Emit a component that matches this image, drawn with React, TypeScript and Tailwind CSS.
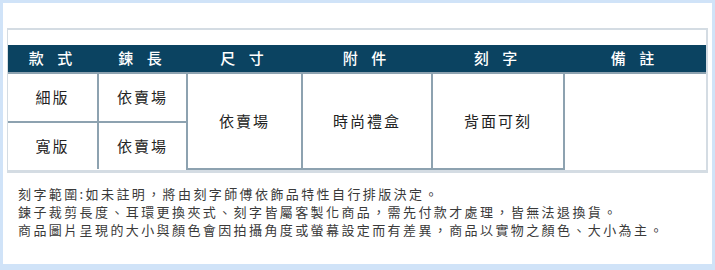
import React from 'react';

const cols = [
  { label: '款 式', w: 'w-[90px]' },
  { label: '鍊 長', w: 'w-[89px]' },
  { label: '尺 寸', w: 'w-[115px]' },
  { label: '附 件', w: 'w-[130px]' },
  { label: '刻 字', w: 'w-[132px]' },
  { label: '備 註', w: 'w-[142px]' },
];

const notes = [
  '刻字範圍:如未註明，將由刻字師傅依飾品特性自行排版決定。',
  '鍊子裁剪長度、耳環更換夾式、刻字皆屬客製化商品，需先付款才處理，皆無法退換貨。',
  '商品圖片呈現的大小與顏色會因拍攝角度或螢幕設定而有差異，商品以實物之顏色、大小為主。',
];

const cell = 'border-2 border-[#8da2b0] text-center align-middle text-[15px] tracking-[2px] text-[#222]';

export default function App() {
  return (
    <div
      className="w-[715px] h-[270px] bg-white border-[#d0e3f8] border-t-[3px] border-x-[3px] border-b-[6px] px-[4px] pt-[25px]"
      style={{ fontFamily: '"Noto Sans CJK TC", "Noto Sans", sans-serif' }}
    >
      {/* spec table */}
      <div className="w-[701px] border-[#d4dce3] border-l border-t-2 border-r-2 border-b-[3px] pt-[15px]">
        <table className="w-[698px] border-collapse table-fixed">
          <thead>
            <tr className="h-[28px] bg-[#0b4361]">
              {cols.map((c) => (
                <th
                  key={c.label}
                  className={`${c.w} p-0 text-center text-[15px] font-medium tracking-[5px] text-white`}
                >
                  {c.label}
                </th>
              ))}
            </tr>
          </thead>
          <tbody>
            <tr className="h-[49px]">
              <td className={`${cell} border-l-0`}>細版</td>
              <td className={cell}>依賣場</td>
              <td rowSpan={2} className={cell}>依賣場</td>
              <td rowSpan={2} className={cell}>時尚禮盒</td>
              <td rowSpan={2} className={cell}>背面可刻</td>
              <td rowSpan={2} className={`${cell} border-r-0 border-b-0`}></td>
            </tr>
            <tr className="h-[47px]">
              <td className={`${cell} border-l-0 border-b-0`}>寬版</td>
              <td className={`${cell} border-b-0`}>依賣場</td>
            </tr>
          </tbody>
        </table>
      </div>

      {/* notes */}
      <div className="mt-[12px] pl-[11px] text-[13px] leading-[18px] tracking-[2.4px] text-[#3a3a3a]">
        {notes.map((n) => (
          <p key={n}>{n}</p>
        ))}
      </div>
    </div>
  );
}
